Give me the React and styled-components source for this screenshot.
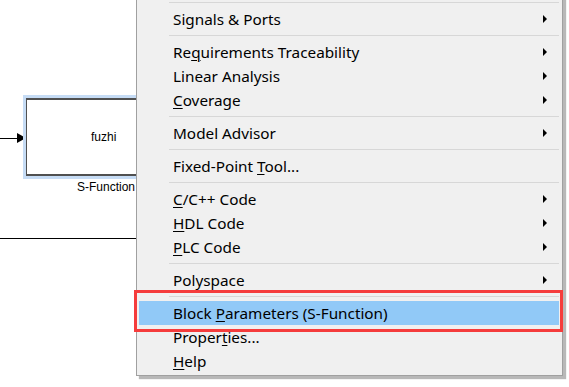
import React from 'react'
import styled, { createGlobalStyle } from 'styled-components'

const GlobalStyle = createGlobalStyle`
  html, body {
    margin: 0;
    padding: 0;
    background: #ffffff;
  }
  body {
    font-family: 'Noto Sans', 'Liberation Sans', sans-serif;
  }
`

const Canvas = styled.div`
  position: relative;
  width: 569px;
  height: 387px;
  overflow: hidden;
  background: #ffffff;
`

// diagram nodes sit on a free canvas, so they keep their coordinates
const InputSignal = styled.div`
  position: absolute;
  left: 0;
  top: 133px;
  height: 10px;
  display: flex;
  align-items: center;

  &::before {
    content: '';
    width: 17px;
    height: 1px;
    background: #000000;
  }
  &::after {
    content: '';
    border-top: 5px solid transparent;
    border-bottom: 5px solid transparent;
    border-left: 9px solid #000000;
  }
`

const OutputLine = styled.div`
  position: absolute;
  left: 0;
  top: 238px;
  width: 137px;
  height: 1px;
  background: #000000;
`

const Block = styled.div`
  position: absolute;
  left: 23px;
  top: 95px;
  display: flex;
  flex-direction: column;
  align-items: flex-end;
  gap: 1px;
  font-family: 'Liberation Sans', Arial, sans-serif;
  font-size: 12px;
  color: #000000;
`

const BlockFrame = styled.div`
  width: 160px;
  height: 84px;
  box-sizing: border-box;
  border: 3px solid #c6dcf5;
  background: #ffffff;
`

const BlockBody = styled.div`
  box-sizing: border-box;
  height: 100%;
  border-top: 2px solid #505050;
  border-bottom: 2px solid #505050;
  border-left: 1px solid #505050;
  display: flex;
  align-items: center;
  padding-left: 64px;
`

const BlockLabel = styled.div`
  margin-right: 48px;
  background: #ffffff;
`

const Menu = styled.div`
  position: absolute;
  left: 136px;
  top: -3px;
  width: 427px;
  box-sizing: border-box;
  background: #f0f0f0;
  border: 1px solid #a0a0a0;
  box-shadow: 3px 3px 1px rgba(0, 0, 0, 0.28);
  padding: 0 3px 2px 2px;
  display: flex;
  flex-direction: column;
`

const Separator = styled.div`
  height: 9px;
  display: flex;
  align-items: center;
  padding-left: 30px;

  &::after {
    content: '';
    flex: 1;
    height: 1px;
    background: #d7d7d7;
  }
`

const Item = styled.div`
  height: 24px;
  display: flex;
  align-items: center;
  justify-content: space-between;
  padding: 0 12px 0 34px;
  font-size: 15.3px;
  color: #000000;
  background: ${(p) => (p.active ? '#91c9f7' : 'transparent')};
  white-space: nowrap;
`

const Key = styled.span`
  text-decoration: underline;
  text-underline-offset: 2px;
  text-decoration-thickness: 1px;
`

const SubArrow = styled.span`
  width: 0;
  height: 0;
  border-top: 4px solid transparent;
  border-bottom: 4px solid transparent;
  border-left: 4px solid #000000;
`

// red annotation drawn over the menu
const Highlight = styled.div`
  position: absolute;
  left: 134px;
  top: 290px;
  width: 429px;
  height: 42px;
  box-sizing: border-box;
  border: 3px solid #f53c3c;
  pointer-events: none;
`

const entries = [
  { sep: true },
  { label: 'Signals & Ports', sub: true },
  { sep: true },
  { label: ['Re', 'q', 'uirements Traceability'], sub: true },
  { label: 'Linear Analysis', sub: true },
  { label: ['', 'C', 'overage'], sub: true },
  { sep: true },
  { label: 'Model Advisor', sub: true },
  { sep: true },
  { label: ['Fixed-Point ', 'T', 'ool...'] },
  { sep: true },
  { label: ['', 'C', '/C++ Code'], sub: true },
  { label: ['', 'H', 'DL Code'], sub: true },
  { label: ['', 'P', 'LC Code'], sub: true },
  { sep: true },
  { label: 'Polyspace', sub: true },
  { sep: true },
  { label: ['Block ', 'P', 'arameters (S-Function)'], active: true },
  { label: ['Proper', 't', 'ies...'] },
  { label: ['', 'H', 'elp'] },
]

function Label({ label }) {
  if (typeof label === 'string') return <span>{label}</span>
  const [before, key, after] = label
  return (
    <span>
      {before}
      <Key>{key}</Key>
      {after}
    </span>
  )
}

export default function App() {
  return (
    <>
      <GlobalStyle />
      <Canvas>
        <InputSignal />
        <Block>
          <BlockFrame>
            <BlockBody>fuzhi</BlockBody>
          </BlockFrame>
          <BlockLabel>S-Function</BlockLabel>
        </Block>
        <OutputLine />

        <Menu>
          {entries.map((e, i) =>
            e.sep ? (
              <Separator key={i} />
            ) : (
              <Item key={i} active={e.active}>
                <Label label={e.label} />
                {e.sub && <SubArrow />}
              </Item>
            )
          )}
        </Menu>
        <Highlight />
      </Canvas>
    </>
  )
}
